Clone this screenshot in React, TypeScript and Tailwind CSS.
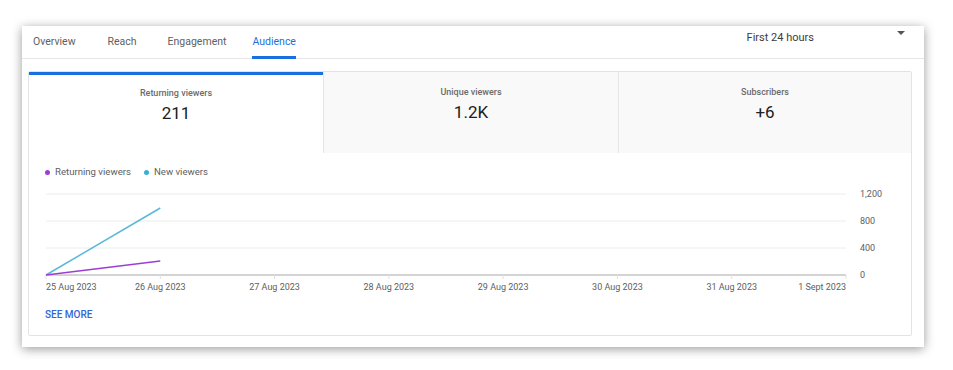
const tabs = [
  { label: 'Overview', ml: 'ml-[11px]' },
  { label: 'Reach', ml: 'ml-[32px]' },
  { label: 'Engagement', ml: 'ml-[31px]' },
  { label: 'Audience', ml: 'ml-[26px]', active: true },
];

const metrics = [
  { label: 'Returning viewers', value: '211', active: true },
  { label: 'Unique viewers', value: '1.2K' },
  { label: 'Subscribers', value: '+6' },
];

const dates = [
  '25 Aug 2023',
  '26 Aug 2023',
  '27 Aug 2023',
  '28 Aug 2023',
  '29 Aug 2023',
  '30 Aug 2023',
  '31 Aug 2023',
  '1 Sept 2023',
];

const yTicks = [
  { label: '1,200', y: 8 },
  { label: '800', y: 35 },
  { label: '400', y: 62 },
  { label: '0', y: 89 },
];

function AudienceChart(): JSX.Element {
  const left = 17;
  const step = 800 / 7;
  return (
    <svg width="884" height="110" className="block" fontFamily="Roboto, 'Liberation Sans', sans-serif">
      {yTicks.slice(0, 3).map((t) => (
        <line key={t.label} x1={left} x2={817} y1={t.y} y2={t.y} stroke="#ececec" strokeWidth="1" />
      ))}
      <line x1={left} x2={817} y1={89} y2={89} stroke="#a8a8a8" strokeWidth="1" />
      {dates.map((d, i) => (
        <line key={d} x1={left + i * step} x2={left + i * step} y1={89} y2={93} stroke="#e0e0e0" strokeWidth="1" />
      ))}
      {yTicks.map((t) => (
        <text key={t.label} x={831} y={t.y + 3} fontSize="9" fill="#606060">
          {t.label}
        </text>
      ))}
      {dates.map((d, i) => (
        <text
          key={d}
          x={left + i * step}
          y={104}
          fontSize="9"
          fill="#606060"
          textAnchor={i === 0 ? 'start' : i === dates.length - 1 ? 'end' : 'middle'}
        >
          {d}
        </text>
      ))}
      <line x1={left} y1={89} x2={left + step} y2={22} stroke="#5ab9da" strokeWidth="1.5" />
      <line x1={left} y1={89} x2={left + step} y2={75} stroke="#9a3fd6" strokeWidth="1.5" />
    </svg>
  );
}

export default function App(): JSX.Element {
  return (
    <div className="h-[370px] w-[953px] bg-white pl-[22px] pt-[26px] font-['Roboto','Liberation_Sans',sans-serif]">
      <section className="h-[321px] w-[902px] bg-white shadow-[0_2px_10px_rgba(0,0,0,0.4)]">
        <header className="relative flex h-[33px] border-b border-[#e6e6e6]">
          {tabs.map((tab) => (
            <div
              key={tab.label}
              className={`${tab.ml} relative flex h-full items-center text-[10.5px] ${
                tab.active ? 'text-[#1a6fe0]' : 'text-[#606060]'
              }`}
            >
              {tab.label}
              {tab.active ? (
                <span className="absolute bottom-[-1px] left-0 right-0 h-[3px] bg-[#1a6fe0]" />
              ) : null}
            </div>
          ))}
          <div className="ml-auto mr-[19px] flex items-start pt-[4px]">
            <span className="mr-[83px] mt-0 text-[11px] text-[#3c3c3c]">First 24 hours</span>
            <span className="mt-[1px] h-0 w-0 border-x-[4px] border-t-[4px] border-x-transparent border-t-[#555]" />
          </div>
        </header>

        <div className="ml-[6px] mt-[12px] h-[265px] w-[884px] rounded-[2px] border border-[#e3e3e3]">
          <div className="flex h-[81px]">
            {metrics.map((m, i) => (
              <div
                key={m.label}
                className={`flex flex-col items-center ${
                  i === 0 ? 'w-[294px] bg-white' : i === 1 ? 'w-[295px] bg-[#f9f9f9]' : 'flex-1 bg-[#f9f9f9]'
                } ${i > 0 ? 'border-l border-[#e6e6e6]' : ''} ${
                  m.active ? 'border-t-[3px] border-t-[#1a6fe0] pt-[12px]' : 'pt-[14px]'
                }`}
              >
                <span className="text-[9px] font-medium text-[#6b6b6b]">{m.label}</span>
                <span className="text-[17px] leading-[24px] text-[#202020]">{m.value}</span>
              </div>
            ))}
          </div>

          <div className="ml-[16px] mt-[12px] flex items-center text-[9.6px] text-[#606060]">
            <span className="mr-[5px] h-[5px] w-[5px] rounded-full bg-[#9a3fd6]" />
            <span>Returning viewers</span>
            <span className="ml-[13px] mr-[5px] h-[5px] w-[5px] rounded-full bg-[#3aaed4]" />
            <span>New viewers</span>
          </div>

          <div className="mt-[7px]">
            <AudienceChart />
          </div>

          <button type="button" className="ml-[16px] mt-[11px] text-[10px] font-medium text-[#3367d6]">
            SEE MORE
          </button>
        </div>
      </section>
    </div>
  );
}
